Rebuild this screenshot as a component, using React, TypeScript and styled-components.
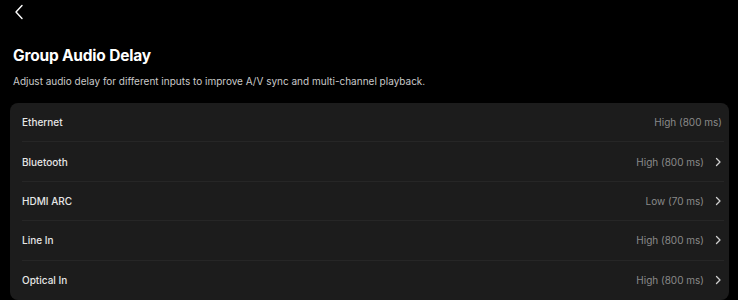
import React from 'react';
import styled, { createGlobalStyle } from 'styled-components';

const GlobalStyle = createGlobalStyle`
  html, body {
    margin: 0;
    padding: 0;
    background: #000;
    font-family: Inter, "Noto Sans", "Liberation Sans", sans-serif;
    -webkit-font-smoothing: antialiased;
  }
`;

const Page = styled.div`
  width: 738px;
  height: 300px;
  overflow: hidden;
  background: #000;
  color: #fff;
  display: flex;
  flex-direction: column;
`;

const TopBar = styled.div`
  height: 24px;
  padding: 4px 0 0 13px;
  display: flex;
  align-items: flex-start;
`;

const BackButton = styled.button`
  background: none;
  border: 0;
  padding: 0;
  width: 12px;
  height: 16px;
  display: flex;
  align-items: center;
  justify-content: center;
  cursor: pointer;
`;

const Header = styled.div`
  padding: 18px 13px 0;
`;

const Title = styled.h1`
  margin: 0;
  font-size: 15.5px;
  line-height: 20px;
  font-weight: 700;
  letter-spacing: -0.2px;
`;

const Subtitle = styled.p`
  margin: 8px 0 0;
  font-size: 10px;
  line-height: 14px;
  color: #c9c9c9;
`;

const Card = styled.div`
  margin: 15px 9px 0 10px;
  background: #1c1c1c;
  border-radius: 8px;
  display: flex;
  flex-direction: column;
`;

const Row = styled.div<{ $last?: boolean }>`
  height: 39.4px;
  margin: 0 5px 0 12px;
  display: flex;
  align-items: center;
  justify-content: space-between;
  border-bottom: ${p => (p.$last ? 'none' : '1px solid #262626')};
  box-sizing: border-box;
`;

const Label = styled.span`
  font-size: 10px;
  font-weight: 500;
  color: #e6e6e6;
`;

const ValueWrap = styled.div`
  display: flex;
  align-items: center;
  gap: 8px;
`;

const Value = styled.span<{ $noChevron?: boolean }>`
  font-size: 10px;
  color: #8a8a8a;
  margin-right: ${p => (p.$noChevron ? '2px' : '0')};
`;

const Chevron = () => (
  <svg width="12" height="12" viewBox="0 0 12 12" fill="none">
    <path d="M4.5 2.5 L8 6 L4.5 9.5" stroke="#cfcfcf" strokeWidth="1.3" strokeLinecap="round" strokeLinejoin="round" />
  </svg>
);

const inputs = [
  { name: 'Ethernet', value: 'High (800 ms)', nav: false },
  { name: 'Bluetooth', value: 'High (800 ms)', nav: true },
  { name: 'HDMI ARC', value: 'Low (70 ms)', nav: true },
  { name: 'Line In', value: 'High (800 ms)', nav: true },
  { name: 'Optical In', value: 'High (800 ms)', nav: true },
];

export default function App() {
  return (
    <Page>
      <GlobalStyle />
      <TopBar>
        <BackButton aria-label="Back">
          <svg width="10" height="16" viewBox="0 0 10 16" fill="none">
            <path d="M8 1.5 L2 8 L8 14.5" stroke="#fff" strokeWidth="1.4" strokeLinecap="round" strokeLinejoin="round" />
          </svg>
        </BackButton>
      </TopBar>
      <Header>
        <Title>Group Audio Delay</Title>
        <Subtitle>Adjust audio delay for different inputs to improve A/V sync and multi-channel playback.</Subtitle>
      </Header>
      <Card>
        {inputs.map((item, i) => (
          <Row key={item.name} $last={i === inputs.length - 1}>
            <Label>{item.name}</Label>
            <ValueWrap>
              <Value $noChevron={!item.nav}>{item.value}</Value>
              {item.nav && <Chevron />}
            </ValueWrap>
          </Row>
        ))}
      </Card>
    </Page>
  );
}
